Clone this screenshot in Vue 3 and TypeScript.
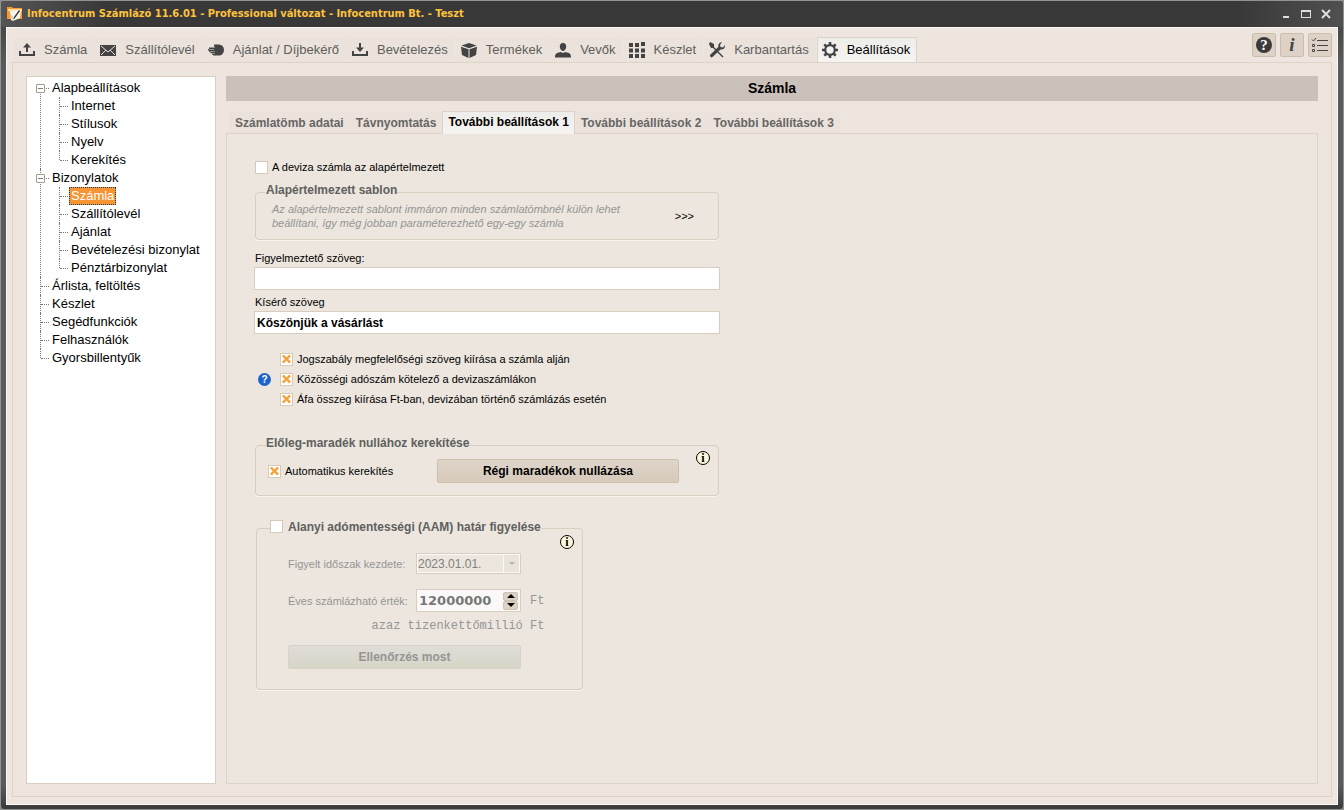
<script setup lang="ts">
import { ref } from 'vue'

interface TreeNode {
  label: string
  children?: string[]
}

const modules = [
  { id: 'upload', label: 'Számla' },
  { id: 'mail', label: 'Szállítólevél' },
  { id: 'hand', label: 'Ajánlat / Díjbekérő' },
  { id: 'download', label: 'Bevételezés' },
  { id: 'box', label: 'Termékek' },
  { id: 'user', label: 'Vevők' },
  { id: 'grid', label: 'Készlet' },
  { id: 'tools', label: 'Karbantartás' },
  { id: 'gear', label: 'Beállítások' },
]
const activeModule = ref('gear')

const tree: TreeNode[] = [
  { label: 'Alapbeállítások', children: ['Internet', 'Stílusok', 'Nyelv', 'Kerekítés'] },
  {
    label: 'Bizonylatok',
    children: ['Számla', 'Szállítólevél', 'Ajánlat', 'Bevételezési bizonylat', 'Pénztárbizonylat'],
  },
  { label: 'Árlista, feltöltés' },
  { label: 'Készlet' },
  { label: 'Segédfunkciók' },
  { label: 'Felhasználók' },
  { label: 'Gyorsbillentyűk' },
]
const selectedNode = ref('Számla')

const tabs = [
  'Számlatömb adatai',
  'Távnyomtatás',
  'További beállítások 1',
  'További beállítások 2',
  'További beállítások 3',
]
const activeTab = ref(2)

const foreignDefault = ref(false)
const warningText = ref('')
const closingText = ref('Köszönjük a vásárlást')
const options = ref([
  { id: 'law', label: 'Jogszabály megfelelőségi szöveg kiírása a számla alján', on: true },
  { id: 'tax', label: 'Közösségi adószám kötelező a devizaszámlákon', on: true },
  { id: 'vat', label: 'Áfa összeg kiírása Ft-ban, devizában történő számlázás esetén', on: true },
])
const autoRound = ref(true)
const watchLimit = ref(false)
const limit = ref('12000000')
</script>

<template>
  <div class="window">
    <header class="titlebar">
      <svg class="app-icon" width="16" height="16" viewBox="0 0 16 16">
        <path d="M0 1h5l1 1h9v11H0z" fill="#f79a2b" />
        <path d="M1 3h14v2H1z" fill="#ffd9a0" />
        <path d="M3 5l11-1-1 8-7 3-2-1z" fill="#f7f4ef" />
        <path d="M12 4L7 11l-1 3 2-2 5-7z" fill="#333" />
        <path d="M3 7l3 4-1 3z" fill="#c9c5be" />
      </svg>
      <h1>Infocentrum Számlázó 11.6.01 - Professional változat - Infocentrum Bt. - Teszt</h1>
      <div class="window-buttons">
        <button type="button" aria-label="Kis méret">
          <svg width="12" height="12" viewBox="0 0 12 12"><path d="M3 9h6v2H3z" fill="#dedede" /></svg>
        </button>
        <button type="button" aria-label="Teljes méret">
          <svg width="12" height="12" viewBox="0 0 12 12">
            <path d="M1 3h10v8H1z M2 5v5h8V5z" fill="#dedede" fill-rule="evenodd" />
          </svg>
        </button>
        <button type="button" aria-label="Bezárás">
          <svg width="12" height="12" viewBox="0 0 12 12">
            <path d="M2 3l8 8M10 3l-8 8" stroke="#dedede" stroke-width="2" />
          </svg>
        </button>
      </div>
    </header>

    <div class="client">
      <div class="toolbar">
        <nav class="modules">
          <button
            v-for="m in modules"
            :key="m.id"
            type="button"
            :class="{ active: m.id === activeModule }"
            @click="activeModule = m.id"
          >
            <svg width="16" height="16" viewBox="0 0 16 16" fill="#434343">
              <template v-if="m.id === 'upload'">
                <path d="M8 1L4 5.500h3V10h2V5.500h3z" />
                <path d="M0 9h2v3h12V9h2v5H0z" />
              </template>
              <template v-else-if="m.id === 'mail'">
                <path d="M0 3h16v11H0z" />
                <path d="M1 4l7 6 7-6M1 13l5-5M15 13l-5-5" fill="none" stroke="#e9e1d8" stroke-width="1" />
              </template>
              <template v-else-if="m.id === 'hand'">
                <path d="M6 2.500h5a5 5.500 0 0 1 0 11H7c-2 0-3-.5-3-2H2.500V10H1V8.500H0V7h1V5.500h6L6 4z" />
                <path d="M1 7.500h5M2 9.500h5M3 11.500h4" stroke="#e9e1d8" stroke-width=".5" />
              </template>
              <template v-else-if="m.id === 'download'">
                <path d="M8 10L4 5.500h3V1h2v4.500h3z" />
                <path d="M0 9h2v3h12V9h2v5H0z" />
              </template>
              <template v-else-if="m.id === 'box'">
                <path d="M8 1l7.500 2.500L8 6.300.5 3.500z" />
                <path d="M0 4.700l7.500 2.600V16L1 13z" />
                <path d="M16 4.700L8.500 7.300V16l6.500-3z" />
              </template>
              <template v-else-if="m.id === 'user'">
                <path d="M8 1c2.500 0 3.400 1.700 3.200 4S9.500 9 8 9 5 7.300 4.800 5 5.500 1 8 1z" />
                <path d="M0 15.500c0-3.500 1-4.500 5.500-5.500L8 11l2.500-1c4.500 1 5.500 2 5.500 5.500z" />
              </template>
              <template v-else-if="m.id === 'grid'">
                <path
                  d="M0 1h4v4H0zM6 1h4v4H6zM12 0h4v4h-4zM0 6.500h4v4H0zM6 6.500h4v4H6zM12 6.500h4v4h-4zM0 12h4v4H0zM6 12h4v4H6zM12 12h4v4h-4z"
                />
              </template>
              <template v-else-if="m.id === 'tools'">
                <path d="M1 0l4 2v3l9.500 9.500-1 1L4 6H2L0 2z" />
                <path
                  d="M13 0l-2 3 .5 2L14 5.500 16 3c.3 3-1.500 5-4.500 4.500L3.500 15c-.8 1.300-3.300-.7-2.300-2.200L9.300 5C9 2 10.500.2 13 0z"
                />
              </template>
              <template v-else>
                <circle cx="8" cy="8" r="4.800" fill="none" stroke="#434343" stroke-width="2.200" />
                <path
                  d="M8 0v3M8 13v3M0 8h3M13 8h3M2.300 2.300l2.200 2.200M11.500 11.500l2.200 2.200M13.700 2.300l-2.200 2.200M4.500 11.500l-2.200 2.200"
                  stroke="#434343"
                  stroke-width="2.600"
                />
              </template>
            </svg>
            <span>{{ m.label }}</span>
          </button>
        </nav>
        <div class="quick">
          <button type="button" aria-label="Súgó">
            <svg width="18" height="18" viewBox="0 0 18 18">
              <circle cx="9" cy="9" r="8" fill="#3b3b3b" />
              <text x="9" y="14" text-anchor="middle" class="glyph-help">?</text>
            </svg>
          </button>
          <button type="button" aria-label="Névjegy"><span class="glyph-info">i</span></button>
          <button type="button" aria-label="Lista">
            <svg width="18" height="18" viewBox="0 0 18 18" fill="none" stroke="#444">
              <path d="M6 4.500h11M6 9.500h11M6 14.500h11" />
              <path d="M1 3.500l1.500 1.500L5 2M1.500 8.500h2v2h-2zM1.500 13.500h2v2h-2z" />
            </svg>
          </button>
        </div>
      </div>

      <div class="workspace">
        <aside class="tree">
          <ul>
            <li v-for="node in tree" :key="node.label">
              <div class="node">
                <button v-if="node.children" type="button" class="expander" :aria-label="node.label"></button>
                <span>{{ node.label }}</span>
              </div>
              <ul v-if="node.children">
                <li v-for="child in node.children" :key="child">
                  <div class="node" @click="selectedNode = child">
                    <span :class="{ selected: child === selectedNode }">{{ child }}</span>
                  </div>
                </li>
              </ul>
            </li>
          </ul>
        </aside>

        <main class="content">
          <h2>Számla</h2>
          <div class="tabs" role="tablist">
            <button
              v-for="(tab, i) in tabs"
              :key="tab"
              type="button"
              role="tab"
              :aria-selected="i === activeTab"
              :class="{ active: i === activeTab }"
              @click="activeTab = i"
            >
              {{ tab }}
            </button>
          </div>

          <section class="page">
            <div class="column">
              <label class="check inset"><input v-model="foreignDefault" type="checkbox" />A deviza számla az alapértelmezett</label>

              <fieldset class="template">
                <legend>Alapértelmezett sablon</legend>
                <div class="row">
                  <p>
                    Az alapértelmezett sablont immáron minden számlatömbnél külön lehet beállítani, így még jobban
                    paraméterezhető egy-egy számla
                  </p>
                  <button type="button" class="more">&gt;&gt;&gt;</button>
                </div>
              </fieldset>

              <div class="field">
                <label for="warning">Figyelmeztető szöveg:</label>
                <input id="warning" v-model="warningText" type="text" />
              </div>
              <div class="field">
                <label for="closing">Kísérő szöveg</label>
                <input id="closing" v-model="closingText" type="text" />
              </div>

              <div class="options">
                <button type="button" class="help" aria-label="Súgó">?</button>
                <div class="option-list">
                  <label v-for="o in options" :key="o.id" class="check">
                    <input v-model="o.on" type="checkbox" />{{ o.label }}
                  </label>
                </div>
              </div>

              <fieldset class="rounding">
                <legend>Előleg-maradék nullához kerekítése</legend>
                <div class="row">
                  <label class="check"><input v-model="autoRound" type="checkbox" />Automatikus kerekítés</label>
                  <button type="button" class="action">Régi maradékok nullázása</button>
                  <button type="button" class="info" aria-label="Információ">i</button>
                </div>
              </fieldset>

              <fieldset class="limit">
                <legend>
                  <label class="check"><input v-model="watchLimit" type="checkbox" />Alanyi adómentességi (AAM) határ figyelése</label>
                </legend>
                <div class="row">
                  <div class="limit-form">
                    <label for="start">Figyelt időszak kezdete:</label>
                    <div class="date">
                      <select id="start" disabled>
                        <option>2023.01.01.</option>
                      </select>
                      <i class="drop"></i>
                    </div>
                    <label for="amount" class="second">Éves számlázható érték:</label>
                    <div class="number">
                      <input id="amount" v-model="limit" type="text" inputmode="numeric" disabled />
                      <div class="spin">
                        <button type="button" aria-label="Növelés"><i class="up"></i></button>
                        <button type="button" aria-label="Csökkentés"><i class="down"></i></button>
                      </div>
                    </div>
                    <span class="unit">Ft</span>
                    <output class="words" for="amount">azaz tizenkettőmillió Ft</output>
                    <button type="button" class="action" disabled>Ellenőrzés most</button>
                  </div>
                  <button type="button" class="info" aria-label="Információ">i</button>
                </div>
              </fieldset>
            </div>
          </section>
        </main>
      </div>
    </div>
  </div>
</template>

<style>
html,
body {
  margin: 0;
  background: #8b8e8c;
}
</style>

<style scoped>
* {
  box-sizing: border-box;
}
button,
input,
select {
  margin: 0;
  padding: 0;
  border: 0;
  border-radius: 0;
  background: none;
  font: inherit;
  color: inherit;
}
ul {
  list-style: none;
  margin: 0;
  padding: 0;
}

.window {
  display: flex;
  flex-direction: column;
  min-height: 100vh;
  padding: 0 5px 4px;
  border: 1px solid #8f9391;
  border-radius: 4px;
  background: linear-gradient(#3a3a3a, #5a5c5b 8%, #5a5c5b 97%, #3a3a3a);
  font-family: 'Liberation Sans', Arial, sans-serif;
  font-size: 11px;
  color: #000;
}

.titlebar {
  display: flex;
  align-items: center;
  height: 26px;
  margin: 0 -5px;
  padding: 0 11px 0 6px;
  border-radius: 3px 3px 0 0;
  background: linear-gradient(90deg, #555, #383838 8%, #383838 92%, #505050);
}
.titlebar h1 {
  flex: 1;
  margin: 0 0 0 4px;
  font: bold 11px/14px 'DejaVu Sans Condensed', 'Noto Sans', sans-serif;
  color: #ffc23d;
}
.window-buttons {
  display: flex;
  gap: 8px;
  padding-bottom: 2px;
}
.window-buttons button {
  width: 12px;
  height: 12px;
}
.window-buttons svg {
  display: block;
}

.client {
  flex: 1;
  display: flex;
  flex-direction: column;
  padding: 0 5px 7px;
  border: 1px solid #fbf8f4;
  background: #ede5de;
}
.toolbar {
  display: flex;
  justify-content: space-between;
  height: 34px;
  padding-left: 2px;
}
.modules {
  display: flex;
  align-items: flex-end;
  gap: 1px;
}
.modules button {
  display: flex;
  align-items: center;
  gap: 9px;
  height: 25px;
  padding: 0 6px 0 4px;
  border: 1px solid transparent;
  border-bottom: 0;
  background: #ebe3db;
  font-size: 13px;
  line-height: 16px;
  color: #5e5e5e;
}
.modules button.active {
  height: 26px;
  margin-bottom: -1px;
  padding-bottom: 2px;
  border-color: #dcd2c5;
  background: linear-gradient(#ededea, #f6f4f3);
  color: #000;
}
.quick {
  display: flex;
  gap: 4px;
  padding-top: 5px;
}
.quick button {
  display: grid;
  place-items: center;
  width: 24px;
  height: 24px;
  border: 1px solid #cbbfae;
  border-radius: 2px;
  background: #ddd2c5;
}
.glyph-help {
  font: bold 15px 'Liberation Serif', serif;
  fill: #fff;
}
.glyph-info {
  font: italic bold 19px/22px 'Liberation Serif', serif;
  color: #444;
}

.workspace {
  flex: 1;
  display: grid;
  grid-template-columns: 190px 1fr;
  gap: 10px;
  padding: 13px 13px 12px;
  border: 1px solid #ddd3c6;
}

.tree {
  padding: 2px 0 0 13px;
  border: 1px solid #d8cfc0;
  background: #fff;
  font-size: 13px;
  line-height: 18px;
  white-space: nowrap;
}
.tree li {
  position: relative;
}
.tree li li {
  margin-left: 19px;
}
.tree li::before {
  content: '';
  position: absolute;
  inset: 0 auto 0 0;
  border-left: 1px dotted #777;
}
.tree > ul > li:first-child::before {
  top: 9px;
}
.tree li:last-child::before {
  bottom: auto;
  height: 9px;
}
.node {
  position: relative;
  display: flex;
  height: 18px;
  padding-left: 10px;
}
.node::before {
  content: '';
  position: absolute;
  top: 9px;
  left: 1px;
  width: 8px;
  border-top: 1px dotted #777;
}
.node span {
  padding: 0 2px;
}
.node .selected {
  outline: 1px dotted #1c3f66;
  outline-offset: -1px;
  background: #f79433;
  color: #fff;
}
.expander {
  position: absolute;
  top: 5px;
  left: -4px;
  width: 9px;
  height: 9px;
  border: 1px solid #a79a8d;
  border-radius: 1px;
  background: linear-gradient(#8a7d70, #8a7d70) center / 5px 1px no-repeat #fff;
}

.content {
  display: flex;
  flex-direction: column;
  min-width: 0;
}
.content h2 {
  margin: 0 0 10px;
  background: #cac1bb;
  font-size: 14px;
  line-height: 25px;
  text-align: center;
}
.tabs {
  display: flex;
  align-items: flex-end;
  height: 22px;
  padding-left: 3px;
}
.tabs button {
  height: 21px;
  padding: 0 5px;
  border: 1px solid transparent;
  border-bottom: 0;
  background: #ebe3db;
  font-size: 12px;
  font-weight: bold;
  line-height: 18px;
  color: #666;
}
.tabs .active {
  position: relative;
  height: 23px;
  margin-bottom: -1px;
  padding-bottom: 2px;
  border-color: #dcd2c5;
  background: linear-gradient(#ededea, #f6f4f3);
  color: #000;
}
.page {
  flex: 1;
  padding: 26px 27px;
  border: 1px solid #ddd3c6;
  background: #ece6de;
}
.column {
  display: flex;
  flex-direction: column;
  max-width: 466px;
}

.check {
  display: flex;
  align-items: center;
  gap: 4px;
  line-height: 14px;
}
.check input {
  appearance: none;
  display: grid;
  place-items: center;
  flex: none;
  width: 13px;
  height: 13px;
  border: 1px solid #d6c9b6;
  background: #fff;
}
.check input:checked::before {
  content: '';
  width: 9px;
  height: 9px;
  background: #f7a035;
  clip-path: polygon(0 20%, 20% 0, 50% 32%, 80% 0, 100% 20%, 68% 50%, 100% 80%, 80% 100%, 50% 68%, 20% 100%, 0 80%, 32% 50%);
}
.inset {
  margin-left: 1px;
}

fieldset {
  min-width: 0;
  margin: 0 1px;
  padding: 0 8px 0 10px;
  border: 1px solid #d8cdbe;
  border-radius: 4px;
  box-shadow: 0 1px 0 #f8f4ee;
}
legend {
  padding: 0 0 4px;
  font-size: 12px;
  font-weight: bold;
  line-height: 12px;
  color: #606060;
}
.row {
  display: flex;
  align-items: flex-start;
}
.template {
  margin-top: 10px;
  padding-bottom: 9px;
}
.template .row {
  align-items: center;
  justify-content: space-between;
  padding: 2px 16px 0 6px;
}
.template p {
  max-width: 376px;
  margin: 0;
  font-style: italic;
  line-height: 14px;
  color: #959595;
}

.field {
  display: flex;
  flex-direction: column;
}
.template + .field {
  margin-top: 6px;
}
.field label {
  padding: 5px 1px 2px;
  line-height: 14px;
}
.field input {
  height: 23px;
  padding: 0 2px;
  border: 1px solid #d8cdbe;
  background: #fff;
  font-size: 12px;
  font-weight: bold;
}

.options {
  display: flex;
  align-items: center;
  gap: 9px;
  margin: 15px 0 0 4px;
}
.help {
  width: 13px;
  height: 13px;
  border-radius: 50%;
  background: #1e62d0;
  font-size: 10px;
  font-weight: bold;
  line-height: 13px;
  color: #fff;
}
.option-list .check {
  height: 20px;
}

.rounding {
  margin-top: 28px;
  padding-bottom: 12px;
}
.rounding .row {
  padding-left: 2px;
}
.rounding .check {
  height: 24px;
  margin-top: 6px;
}
.action {
  height: 24px;
  border: 1px solid #cdbfac;
  border-radius: 2px;
  background: linear-gradient(#ded5c9, #d7cabb);
  font-size: 12px;
  font-weight: bold;
}
.action:disabled {
  border-color: #d8d3c8;
  background: linear-gradient(#e0ddd8, #d7d4c7);
  color: #959595;
}
.rounding .action {
  width: 242px;
  margin: 6px 0 0 auto;
}
.info {
  flex: none;
  width: 14px;
  height: 14px;
  margin: -2px 0 0 17px;
  border: 1px solid #000;
  border-radius: 50%;
  background: #fff8dc;
  font: bold 12px/12px 'Liberation Serif', serif;
}

.limit {
  width: 327px;
  margin: 24px 0 0 2px;
  padding-bottom: 20px;
}
.limit legend {
  margin-left: 3px;
}
.limit legend .check {
  gap: 5px;
  line-height: 12px;
}
.limit .info {
  margin-left: auto;
}
.limit-form {
  display: grid;
  grid-template-columns: 128px 105px auto;
  align-items: center;
  padding: 16px 0 0 21px;
  color: #959595;
}
.date,
.number {
  display: flex;
  align-items: center;
  padding: 1px;
  border: 1px solid #d8cdbe;
  background: #fbf9f7;
}
.date {
  height: 21px;
  margin-bottom: 15px;
}
.limit-form label:first-child {
  margin-bottom: 15px;
}
.date select {
  flex: 1;
  height: 17px;
  appearance: none;
  background: #ece6de;
  font-size: 12px;
  line-height: 16px;
  color: #808080;
  opacity: 1;
}
.drop {
  width: 15px;
  height: 17px;
  margin-left: 1px;
  background: #e8e4da;
}
.drop::before {
  content: '';
  display: block;
  margin: 7px 5px;
  border: 3px solid transparent;
  border-top-color: #b9b5ad;
  border-bottom: 0;
}
.second {
  grid-column: 1;
}
.number {
  height: 23px;
}
.number input {
  flex: 1;
  min-width: 0;
  padding-left: 1px;
  font: bold 13px/18px 'DejaVu Sans', Verdana, sans-serif;
  color: #777;
}
.spin {
  display: flex;
  flex-direction: column;
  width: 15px;
  height: 18px;
  margin-right: 1px;
}
.spin button {
  flex: 1;
  display: grid;
  place-items: center;
  border: 1px solid #cfc2b3;
  border-radius: 2px;
  background: #ddd2c5;
}
.up,
.down {
  border: 4px solid transparent;
}
.up {
  border-bottom-color: #000;
  border-top: 0;
}
.down {
  border-top-color: #000;
  border-bottom: 0;
}
.unit,
.words {
  font: 12px/14px 'Liberation Mono', 'Courier New', monospace;
}
.unit {
  padding-left: 9px;
}
.words {
  grid-column: 1 / -1;
  margin: 7px 0 12px;
  text-align: right;
}
.limit-form .action {
  grid-column: 1 / 3;
}
</style>
